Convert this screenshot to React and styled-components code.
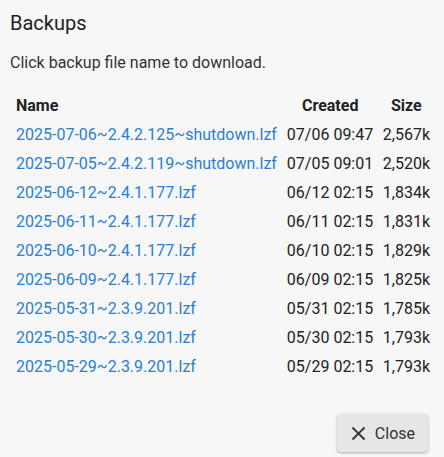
import React from 'react';
import styled, { createGlobalStyle } from 'styled-components';

const backups = [
    { name: '2025-07-06~2.4.2.125~shutdown.lzf', created: '07/06 09:47', size: '2,567k' },
    { name: '2025-07-05~2.4.2.119~shutdown.lzf', created: '07/05 09:01', size: '2,520k' },
    { name: '2025-06-12~2.4.1.177.lzf', created: '06/12 02:15', size: '1,834k' },
    { name: '2025-06-11~2.4.1.177.lzf', created: '06/11 02:15', size: '1,831k' },
    { name: '2025-06-10~2.4.1.177.lzf', created: '06/10 02:15', size: '1,829k' },
    { name: '2025-06-09~2.4.1.177.lzf', created: '06/09 02:15', size: '1,825k' },
    { name: '2025-05-31~2.3.9.201.lzf', created: '05/31 02:15', size: '1,785k' },
    { name: '2025-05-30~2.3.9.201.lzf', created: '05/30 02:15', size: '1,793k' },
    { name: '2025-05-29~2.3.9.201.lzf', created: '05/29 02:15', size: '1,793k' },
];

const GlobalStyle = createGlobalStyle`
    html, body {
        margin: 0;
        padding: 0;
        background: #f7f7f7;
        font-family: Roboto, "Liberation Sans", sans-serif;
        color: #222;
    }
`;

const CloseIcon = () => (
    <svg width="23" height="23" viewBox="0 0 24 24">
        <path d="M19 6.41 17.59 5 12 10.59 6.41 5 5 6.41 10.59 12 5 17.59 6.41 19 12 13.41 17.59 19 19 17.59 13.41 12z" fill="#333" />
    </svg>
);

export default function App() {
    return (
        <Dialog>
            <GlobalStyle />
            <Title>Backups</Title>
            <Hint>Click backup file name to download.</Hint>
            <Table>
                <thead>
                    <tr>
                        <Th>Name</Th>
                        <Th center>Created</Th>
                        <Th center>Size</Th>
                    </tr>
                </thead>
                <tbody>
                    {backups.map(b => (
                        <tr key={b.name}>
                            <Td><Link href="#">{b.name}</Link></Td>
                            <Td>{b.created}</Td>
                            <Td right>{b.size}</Td>
                        </tr>
                    ))}
                </tbody>
            </Table>
            <Actions>
                <Button><CloseIcon />Close</Button>
            </Actions>
        </Dialog>
    );
}

const Dialog = styled.div`
    width: 444px;
    height: 457px;
    box-sizing: border-box;
    padding: 11px 10px 0 10px;
    display: flex;
    flex-direction: column;
`;
const Title = styled.div`
    font-size: 20px;
    line-height: 24px;
    color: #222;
`;
const Hint = styled.div`
    margin-top: 18px;
    font-size: 16px;
    line-height: 20px;
    color: #333;
`;
const Table = styled.table`
    margin-top: 18px;
    margin-left: 1px;
    border-collapse: collapse;
    font-size: 16px;
`;
const Th = styled.th`
    padding: 0 4px 0 5px;
    height: 29px;
    font-weight: 700;
    text-align: ${p => (p.center ? 'center' : 'left')};
    color: #222;
`;
const Td = styled.td`
    padding: 0 4px 0 5px;
    height: 29px;
    white-space: nowrap;
    text-align: ${p => (p.right ? 'right' : 'left')};
    color: #222;
`;
const Link = styled.a`
    color: #2a7fd4;
    text-decoration: none;
`;
const Actions = styled.div`
    margin-top: auto;
    padding-bottom: 5px;
    display: flex;
    justify-content: flex-end;
    padding-right: 6px;
`;
const Button = styled.button`
    display: flex;
    align-items: center;
    gap: 5px;
    height: 38px;
    padding: 0 13px 0 10px;
    border: none;
    border-radius: 4px;
    background: #e6e6e6;
    box-shadow: 0 1px 3px rgba(0, 0, 0, 0.3);
    font-family: Roboto, "Liberation Sans", sans-serif;
    font-size: 16px;
    color: #333;
`;
